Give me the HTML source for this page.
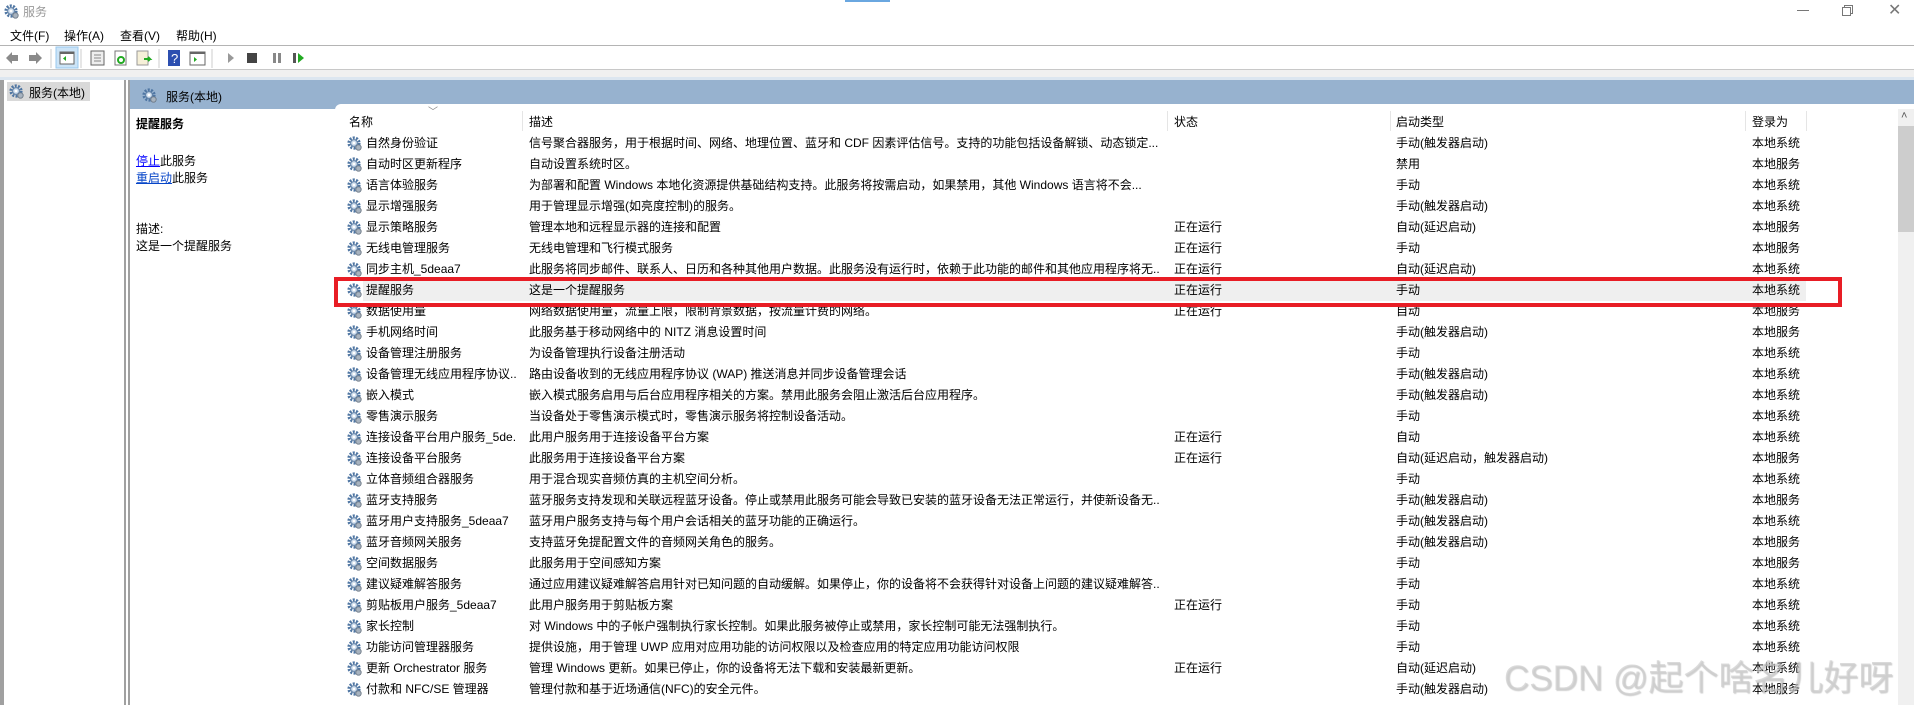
<!DOCTYPE html>
<html><head><meta charset="utf-8">
<style>
*{margin:0;padding:0;box-sizing:border-box}
body{width:1914px;height:705px;overflow:hidden;background:#fff;font-family:"Liberation Sans","Noto Sans CJK SC",sans-serif;font-size:12px;color:#000;position:relative}
.a{position:absolute;white-space:nowrap}
.row{position:absolute;left:335px;width:1470px;height:21px;}
.row span{position:absolute;top:0;line-height:21px;white-space:nowrap;overflow:hidden}
.c1{left:31px;width:150px}
.c2{left:194px;width:630px}
.c3{left:839px}
.c4{left:1061px}
.c5{left:1417px}
.gi{position:absolute;left:12px;top:3px;width:15px;height:15px}
.sep{position:absolute;top:111px;width:1px;height:20px;background:#e5e5e5}
</style></head><body>
<svg width="0" height="0" style="position:absolute"><defs>
<g id="gear"><circle cx="7" cy="7" r="5.2" fill="none" stroke="#4f76a3" stroke-width="2.8" stroke-dasharray="2 1.3"/><circle cx="7" cy="7" r="3.4" fill="#c9d9ea" stroke="#5f7fa5" stroke-width="1"/><circle cx="7" cy="7" r="1.4" fill="#fff"/><circle cx="11.5" cy="11.5" r="2.7" fill="#a8b3bf" stroke="#6f7b88" stroke-width="0.9"/></g>
</defs></svg>

<svg class="a" style="left:4px;top:4px" width="16" height="16"><use href="#gear"/></svg>
<div class="a" style="left:23px;top:3px;color:#999;font-size:12px">服务</div>
<div class="a" style="left:1797px;top:10px;width:12px;height:1px;background:#777"></div>
<div class="a" style="left:1844px;top:5px;width:9px;height:9px;border:1px solid #777"></div>
<div class="a" style="left:1842px;top:7px;width:9px;height:9px;border:1px solid #777;background:#fff"></div>
<div class="a" style="left:1888px;top:0px;color:#777;font-size:16px">✕</div>
<div class="a" style="left:845px;top:0;width:45px;height:2px;background:#6aa7e0"></div>
<div class="a" style="left:10px;top:27px">文件(F)</div>
<div class="a" style="left:64px;top:27px">操作(A)</div>
<div class="a" style="left:120px;top:27px">查看(V)</div>
<div class="a" style="left:176px;top:27px">帮助(H)</div>
<div class="a" style="left:0;top:45px;width:1914px;height:1px;background:#b4b4b4"></div>
<svg class="a" style="left:0;top:46px" width="320" height="24">
<path d="M6 12 L12 6 V9 H18 V15 H12 V18Z" fill="#8a8a8a"/>
<path d="M42 12 L36 6 V9 H29 V15 H36 V18Z" fill="#8a8a8a"/>
<line x1="51" y1="3" x2="51" y2="22" stroke="#ccc"/>
<rect x="56" y="1" width="22" height="21" fill="#cce4f7" stroke="#99c9ef"/>
<rect x="60" y="6" width="14" height="12" fill="#fff" stroke="#666"/><rect x="60" y="6" width="14" height="2" fill="#666"/><path d="M66 10 L63 12.5 L66 15Z" fill="#2a2"/>
<line x1="81" y1="3" x2="81" y2="22" stroke="#ccc"/>
<rect x="91" y="5" width="13" height="14" fill="#eee" stroke="#666"/><path d="M94 9h7M94 12h7M94 15h7" stroke="#888"/>
<rect x="115" y="5" width="11" height="14" fill="#fff" stroke="#777"/><circle cx="121" cy="14" r="3" fill="none" stroke="#2a2" stroke-width="2"/>
<rect x="137" y="5" width="11" height="14" fill="#f6f0d8" stroke="#999"/><path d="M144 13h6l-2-2m2 2l-2 2" stroke="#2a2" stroke-width="2" fill="none"/>
<line x1="159" y1="3" x2="159" y2="22" stroke="#ccc"/>
<rect x="168" y="4" width="12" height="16" fill="#2c4fb0"/><text x="171" y="17" fill="#fff" font-size="13" font-family="Liberation Sans">?</text>
<rect x="190" y="6" width="15" height="13" fill="#fff" stroke="#666"/><rect x="190" y="6" width="15" height="2" fill="#666"/><path d="M194 11v5l3-2.5z" fill="#2a2"/>
<line x1="212" y1="3" x2="212" y2="22" stroke="#ccc"/>
<path d="M228 7 L234 12 L228 17Z" fill="#999"/>
<rect x="247" y="7" width="10" height="10" fill="#444"/>
<rect x="273" y="7" width="3" height="10" fill="#888"/><rect x="278" y="7" width="3" height="10" fill="#888"/>
<rect x="293" y="7" width="3" height="10" fill="#555"/><path d="M298 7 L304 12 L298 17Z" fill="#2a2"/>
</svg>
<div class="a" style="left:0;top:69px;width:1914px;height:1px;background:#c8c8c8"></div>
<div class="a" style="left:0;top:70px;width:1914px;height:8px;background:#f0f0f0"></div>
<div class="a" style="left:0;top:77px;width:1914px;height:3px;background:#dce6f0"></div>
<div class="a" style="left:0;top:80px;width:4px;height:625px;background:#a0a0a0"></div>
<div class="a" style="left:124px;top:80px;width:2px;height:625px;background:#a0a0a0"></div>
<div class="a" style="left:128px;top:80px;width:2px;height:625px;background:#a0a0a0"></div>
<div class="a" style="left:7px;top:82px;width:83px;height:19px;background:#d9d9d9"></div>
<svg class="a" style="left:9px;top:84px" width="16" height="16"><use href="#gear"/></svg>
<div class="a" style="left:29px;top:84px">服务(本地)</div>
<div class="a" style="left:130px;top:80px;width:1784px;height:29px;background:#97b2cf"></div>
<div class="a" style="left:335px;top:104px;width:1579px;height:6px;background:#fff;border-top-left-radius:6px"></div>
<svg class="a" style="left:142px;top:88px" width="16" height="16"><use href="#gear"/></svg>
<div class="a" style="left:166px;top:88px;font-size:12px">服务(本地)</div>
<div class="a" style="left:136px;top:115px;font-weight:bold">提醒服务</div>
<div class="a" style="left:136px;top:152px"><span style="color:#00f;text-decoration:underline">停止</span>此服务</div>
<div class="a" style="left:136px;top:169px"><span style="color:#0645c8;text-decoration:underline">重启动</span>此服务</div>
<div class="a" style="left:136px;top:220px">描述:</div>
<div class="a" style="left:136px;top:237px">这是一个提醒服务</div>
<div class="a" style="left:349px;top:113px">名称</div>
<div class="a" style="left:428px;top:103px;color:#888;font-size:10px">﹀</div>
<div class="sep" style="left:522px"></div>
<div class="a" style="left:529px;top:113px">描述</div>
<div class="sep" style="left:1167px"></div>
<div class="a" style="left:1174px;top:113px">状态</div>
<div class="sep" style="left:1390px"></div>
<div class="a" style="left:1396px;top:113px">启动类型</div>
<div class="sep" style="left:1745px"></div>
<div class="a" style="left:1752px;top:113px">登录为</div>
<div class="sep" style="left:1806px"></div>
<div class="a" style="left:1898px;top:109px;width:16px;height:596px;background:#f0f0f0"></div>
<div class="a" style="left:1901px;top:110px;color:#555;font-size:11px">˄</div>
<div class="a" style="left:1898px;top:126px;width:16px;height:106px;background:#cdcdcd"></div>

<div id="rows"></div>
<div class="a" style="left:334px;top:277px;width:1508px;height:30px;border:4px solid #e81d25"></div>
<div class="a" style="left:1504px;top:650px;font-size:35px;color:rgba(205,205,205,0.7);text-shadow:1px 1px 1px rgba(120,120,120,0.35)">CSDN @起个啥名儿好呀</div>

<script>
const d=[
["自然身份验证","信号聚合器服务，用于根据时间、网络、地理位置、蓝牙和 CDF 因素评估信号。支持的功能包括设备解锁、动态锁定...","","手动(触发器启动)","本地系统"],
["自动时区更新程序","自动设置系统时区。","","禁用","本地服务"],
["语言体验服务","为部署和配置 Windows 本地化资源提供基础结构支持。此服务将按需启动，如果禁用，其他 Windows 语言将不会...","","手动","本地系统"],
["显示增强服务","用于管理显示增强(如亮度控制)的服务。","","手动(触发器启动)","本地系统"],
["显示策略服务","管理本地和远程显示器的连接和配置","正在运行","自动(延迟启动)","本地服务"],
["无线电管理服务","无线电管理和飞行模式服务","正在运行","手动","本地服务"],
["同步主机_5deaa7","此服务将同步邮件、联系人、日历和各种其他用户数据。此服务没有运行时，依赖于此功能的邮件和其他应用程序将无...","正在运行","自动(延迟启动)","本地系统"],
["提醒服务","这是一个提醒服务","正在运行","手动","本地系统"],
["数据使用量","网络数据使用量，流量上限，限制背景数据，按流量计费的网络。","正在运行","自动","本地服务"],
["手机网络时间","此服务基于移动网络中的 NITZ 消息设置时间","","手动(触发器启动)","本地服务"],
["设备管理注册服务","为设备管理执行设备注册活动","","手动","本地系统"],
["设备管理无线应用程序协议...","路由设备收到的无线应用程序协议 (WAP) 推送消息并同步设备管理会话","","手动(触发器启动)","本地系统"],
["嵌入模式","嵌入模式服务启用与后台应用程序相关的方案。禁用此服务会阻止激活后台应用程序。","","手动(触发器启动)","本地系统"],
["零售演示服务","当设备处于零售演示模式时，零售演示服务将控制设备活动。","","手动","本地系统"],
["连接设备平台用户服务_5de...","此用户服务用于连接设备平台方案","正在运行","自动","本地系统"],
["连接设备平台服务","此服务用于连接设备平台方案","正在运行","自动(延迟启动，触发器启动)","本地服务"],
["立体音频组合器服务","用于混合现实音频仿真的主机空间分析。","","手动","本地系统"],
["蓝牙支持服务","蓝牙服务支持发现和关联远程蓝牙设备。停止或禁用此服务可能会导致已安装的蓝牙设备无法正常运行，并使新设备无...","","手动(触发器启动)","本地服务"],
["蓝牙用户支持服务_5deaa7","蓝牙用户服务支持与每个用户会话相关的蓝牙功能的正确运行。","","手动(触发器启动)","本地系统"],
["蓝牙音频网关服务","支持蓝牙免提配置文件的音频网关角色的服务。","","手动(触发器启动)","本地服务"],
["空间数据服务","此服务用于空间感知方案","","手动","本地服务"],
["建议疑难解答服务","通过应用建议疑难解答启用针对已知问题的自动缓解。如果停止，你的设备将不会获得针对设备上问题的建议疑难解答...","","手动","本地系统"],
["剪贴板用户服务_5deaa7","此用户服务用于剪贴板方案","正在运行","手动","本地系统"],
["家长控制","对 Windows 中的子帐户强制执行家长控制。如果此服务被停止或禁用，家长控制可能无法强制执行。","","手动","本地系统"],
["功能访问管理器服务","提供设施，用于管理 UWP 应用对应用功能的访问权限以及检查应用的特定应用功能访问权限","","手动","本地系统"],
["更新 Orchestrator 服务","管理 Windows 更新。如果已停止，你的设备将无法下载和安装最新更新。","正在运行","自动(延迟启动)","本地系统"],
["付款和 NFC/SE 管理器","管理付款和基于近场通信(NFC)的安全元件。","","手动(触发器启动)","本地服务"]];
let h="";
d.forEach((r,i)=>{const t=132.5+21.03*i;
h+=`<div class="row" style="top:${t}px;${i==7?'background:#efefef;left:363px;width:1443px':''}">`+
(i==7?`<svg class="gi" style="left:-16px" width="16" height="16"><use href="#gear"/></svg>`:`<svg class="gi" width="16" height="16"><use href="#gear"/></svg>`)+
`<span class="c1" style="${i==7?'left:3px':''}">${r[0]}</span><span class="c2" style="${i==7?'left:166px':''}">${r[1]}</span><span class="c3" style="${i==7?'left:811px':''}">${r[2]}</span><span class="c4" style="${i==7?'left:1033px':''}">${r[3]}</span><span class="c5" style="${i==7?'left:1389px':''}">${r[4]}</span></div>`;});
document.getElementById("rows").innerHTML=h;
</script>
</body></html>
